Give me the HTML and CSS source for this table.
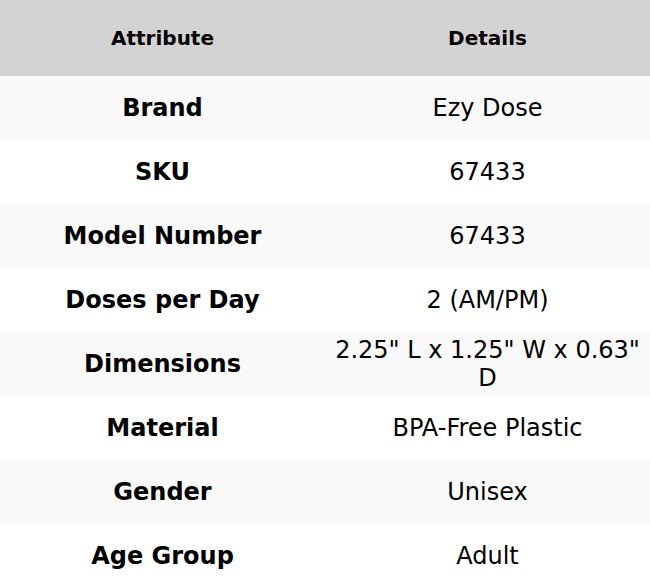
FILE: index.html
```html
<!DOCTYPE html>
<html>
<head>
<meta charset="utf-8">
<link rel="stylesheet" href="styles.css">
</head>
<body>
<table class="spec">
  <thead>
    <tr><th>Attribute</th><th>Details</th></tr>
  </thead>
  <tbody>
    <tr><td class="key">Brand</td><td>Ezy Dose</td></tr>
    <tr><td class="key">SKU</td><td>67433</td></tr>
    <tr><td class="key">Model Number</td><td>67433</td></tr>
    <tr><td class="key">Doses per Day</td><td>2 (AM/PM)</td></tr>
    <tr><td class="key">Dimensions</td><td>2.25" L x 1.25" W x 0.63" D</td></tr>
    <tr><td class="key">Material</td><td>BPA-Free Plastic</td></tr>
    <tr><td class="key">Gender</td><td>Unisex</td></tr>
    <tr><td class="key">Age Group</td><td>Adult</td></tr>
  </tbody>
</table>
</body>
</html>
```
FILE: styles.css
```css
html, body {
  margin: 0;
  padding: 0;
  background: #ffffff;
}
body {
  font-family: "DejaVu Sans", sans-serif;
  color: #000000;
}
.spec {
  width: 100%;
  border-collapse: collapse;
  table-layout: fixed;
}
.spec th {
  background: #d3d3d3;
  font-size: 20px;
  font-weight: bold;
  height: 76px;
  padding: 0 8px;
  text-align: center;
  vertical-align: middle;
  box-sizing: border-box;
}
.spec td {
  font-size: 24px;
  height: 64px;
  padding: 0 8px;
  text-align: center;
  vertical-align: middle;
  box-sizing: border-box;
}
.spec tbody tr:nth-child(odd) {
  background: #f9f9f9;
}
.spec td.key {
  font-weight: bold;
}
```
